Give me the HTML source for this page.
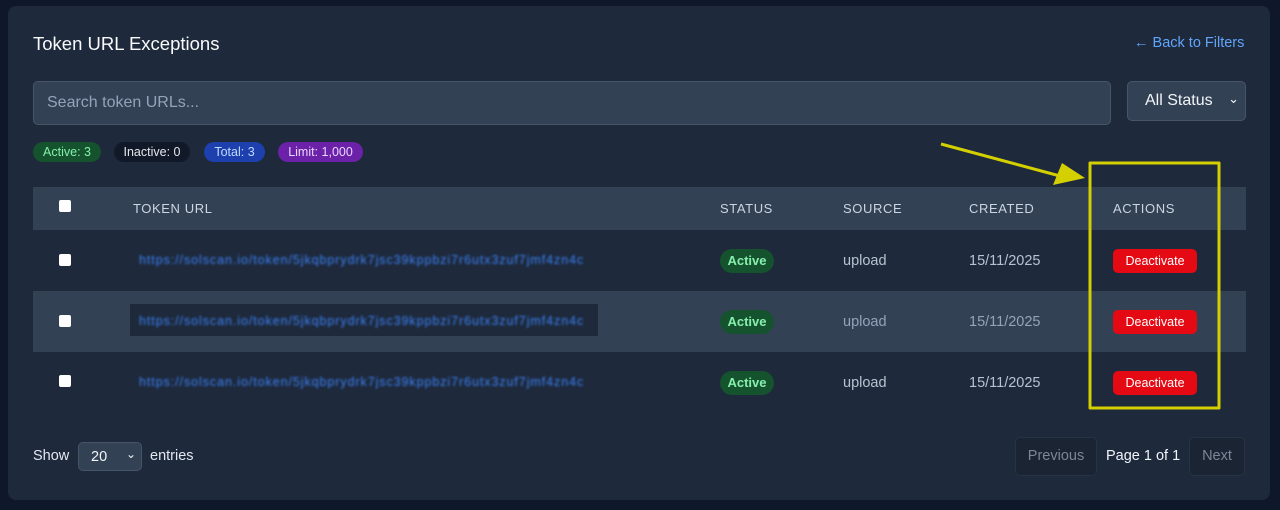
<!DOCTYPE html>
<html><head><style>
*{box-sizing:border-box;margin:0;padding:0}
body{width:1280px;height:510px;background:#0f172a;font-family:"Liberation Sans",sans-serif;position:relative;overflow:hidden;color:#e2e8f0}
.card{position:absolute;left:8px;top:6px;width:1262px;height:494px;background:#1e293b;border-radius:8px}
.a{position:absolute}
.badge{position:absolute;top:142px;height:20px;border-radius:10px;font-size:12.5px;line-height:20px;text-align:center}
.hdr{position:absolute;left:33px;top:187px;width:1213px;height:43px;background:#334155}
.th{position:absolute;top:201px;font-size:13px;letter-spacing:.6px;color:#cbd5e1}
.row{position:absolute;left:33px;width:1213px;height:61px}
.cb{position:absolute;width:12px;height:12px;background:#fff;border-radius:2px;left:59px}
.url{position:absolute;left:139px;font-size:12.5px;letter-spacing:0.93px;color:#3b82f6;filter:blur(1.1px);white-space:nowrap}
.st{position:absolute;left:720px;width:54px;height:24px;border-radius:12px;background:#14532d;color:#86efac;font-weight:bold;font-size:13px;line-height:24px;text-align:center}
.src,.dt{position:absolute;font-size:14.5px;color:#b8c2d0}
.btn{position:absolute;left:1113px;width:84px;height:24px;border-radius:5px;background:#e50914;color:#fff;font-size:12.5px;line-height:24px;text-align:center}
</style></head><body>
<div class="card"></div>
<div class="a" style="left:33px;top:33px;font-size:18.5px;color:#f8fafc">Token URL Exceptions</div>
<div class="a" style="left:1134px;top:35px;font-size:14.5px;color:#60a5fa">← Back to Filters</div>
<div class="a" style="left:33px;top:81px;width:1078px;height:44px;background:#334155;border:1px solid #475569;border-radius:5px;font-size:16px;color:#94a3b8;padding:12px 13px">Search token URLs...</div>
<div class="a" style="left:1127px;top:81px;width:119px;height:40px;background:#334155;border:1px solid #475569;border-radius:5px;font-size:16px;color:#f1f5f9;padding:10px 17px">All Status<span style="position:absolute;right:6px;top:9px;font-size:13px">⌄</span></div>
<div class="badge" style="left:33px;width:68px;background:#14532d;color:#86efac">Active: 3</div>
<div class="badge" style="left:114px;width:76px;background:#111827;color:#e5e7eb">Inactive: 0</div>
<div class="badge" style="left:204px;width:61px;background:#1e40af;color:#bfdbfe">Total: 3</div>
<div class="badge" style="left:278px;width:85px;background:#6b21a8;color:#e9d5ff">Limit: 1,000</div>
<div class="hdr"></div>
<div class="cb" style="top:200px"></div>
<div class="th" style="left:133px">TOKEN URL</div>
<div class="th" style="left:720px">STATUS</div>
<div class="th" style="left:843px">SOURCE</div>
<div class="th" style="left:969px">CREATED</div>
<div class="th" style="left:1113px">ACTIONS</div>

<div class="row" style="top:230px"></div>
<div class="row" style="top:291px;background:#334155"></div>
<div class="a" style="left:130px;top:304px;width:468px;height:32px;background:#1e293b"></div>

<div class="cb" style="top:254px"></div>
<div class="url" style="top:253px">https://solscan.io/token/5jkqbprydrk7jsc39kppbzi7r6utx3zuf7jmf4zn4c</div>
<div class="st" style="top:249px">Active</div>
<div class="src" style="left:843px;top:253px">upload</div>
<div class="dt" style="left:969px;top:253px">15/11/2025</div>
<div class="btn" style="top:249px">Deactivate</div>

<div class="cb" style="top:315px"></div>
<div class="url" style="top:314px">https://solscan.io/token/5jkqbprydrk7jsc39kppbzi7r6utx3zuf7jmf4zn4c</div>
<div class="st" style="top:310px">Active</div>
<div class="src" style="left:843px;top:314px;color:#94a3b8">upload</div>
<div class="dt" style="left:969px;top:314px;color:#94a3b8">15/11/2025</div>
<div class="btn" style="top:310px">Deactivate</div>

<div class="cb" style="top:375px"></div>
<div class="url" style="top:375px">https://solscan.io/token/5jkqbprydrk7jsc39kppbzi7r6utx3zuf7jmf4zn4c</div>
<div class="st" style="top:371px">Active</div>
<div class="src" style="left:843px;top:375px">upload</div>
<div class="dt" style="left:969px;top:375px">15/11/2025</div>
<div class="btn" style="top:371px">Deactivate</div>

<div class="a" style="left:33px;top:448px;font-size:14.5px;color:#e2e8f0">Show</div>
<div class="a" style="left:78px;top:442px;width:64px;height:29px;background:#334155;border:1px solid #475569;border-radius:5px;font-size:14.5px;padding:6px 12px;color:#f1f5f9">20<span style="position:absolute;right:5px;top:4px;font-size:12px">⌄</span></div>
<div class="a" style="left:150px;top:448px;font-size:14.5px;color:#e2e8f0">entries</div>
<div class="a" style="left:1015px;top:437px;width:82px;height:39px;background:#1a2433;border:1px solid #273244;border-radius:5px;font-size:14.5px;color:#7b8696;text-align:center;line-height:37px">Previous</div>
<div class="a" style="left:1106px;top:448px;font-size:14.5px;color:#f1f5f9">Page 1 of 1</div>
<div class="a" style="left:1189px;top:437px;width:56px;height:39px;background:#1a2433;border:1px solid #273244;border-radius:5px;font-size:14.5px;color:#7b8696;text-align:center;line-height:37px">Next</div>

<svg class="a" style="left:0;top:0" width="1280" height="510">
<g stroke="#d4d000" stroke-width="3" fill="none" stroke-linejoin="round">
<line x1="941" y1="144" x2="1060" y2="176"/>
<rect x="1090" y="163" width="129" height="245"/>
</g>
<polygon points="1085,178 1053,185 1062,163" fill="#d4d000"/>
</svg>
</body></html>
